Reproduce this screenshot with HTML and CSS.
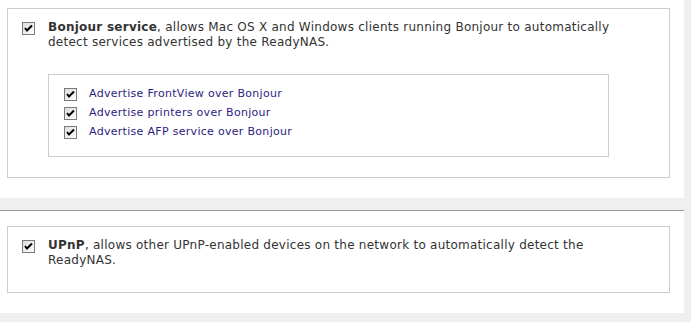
FILE: index.html
```html
<!DOCTYPE html>
<html lang="en">
<head>
  <meta charset="UTF-8" />
  <title>Discovery Services</title>
  <link rel="stylesheet" href="styles.css">
</head>
<body>
  <div class="panel">
    <div class="section top">
      <div class="box">
        <div class="row">
          <span class="check"><svg width="13" height="13" viewBox="0 0 13 13"><defs><linearGradient id="g1" x1="0" y1="0" x2="1" y2="1"><stop offset="0" stop-color="#dcdcdc"/><stop offset="1" stop-color="#ffffff"/></linearGradient></defs><rect x="0.5" y="0.5" width="12" height="12" fill="url(#g1)" stroke="#7b7b7b"/><polyline points="3,6 5,8.5 10,3.5" fill="none" stroke="#000" stroke-width="2"/></svg></span>
          <p class="desc"><b>Bonjour service</b>, allows Mac OS X and Windows clients running Bonjour to automatically detect services advertised by the ReadyNAS.</p>
        </div>

        <div class="options">
          <div class="opt">
            <span class="check"><svg width="13" height="13" viewBox="0 0 13 13"><rect x="0.5" y="0.5" width="12" height="12" fill="url(#g1)" stroke="#7b7b7b"/><polyline points="3,6 5,8.5 10,3.5" fill="none" stroke="#000" stroke-width="2"/></svg></span>
            <span class="opt-label">Advertise FrontView over Bonjour</span>
          </div>
          <div class="opt">
            <span class="check"><svg width="13" height="13" viewBox="0 0 13 13"><rect x="0.5" y="0.5" width="12" height="12" fill="url(#g1)" stroke="#7b7b7b"/><polyline points="3,6 5,8.5 10,3.5" fill="none" stroke="#000" stroke-width="2"/></svg></span>
            <span class="opt-label">Advertise printers over Bonjour</span>
          </div>
          <div class="opt">
            <span class="check"><svg width="13" height="13" viewBox="0 0 13 13"><rect x="0.5" y="0.5" width="12" height="12" fill="url(#g1)" stroke="#7b7b7b"/><polyline points="3,6 5,8.5 10,3.5" fill="none" stroke="#000" stroke-width="2"/></svg></span>
            <span class="opt-label">Advertise AFP service over Bonjour</span>
          </div>
        </div>
      </div>
    </div>

    <div class="gap"></div>

    <div class="section bottom">
      <div class="box box-upnp">
        <div class="row">
          <span class="check"><svg width="13" height="13" viewBox="0 0 13 13"><rect x="0.5" y="0.5" width="12" height="12" fill="url(#g1)" stroke="#7b7b7b"/><polyline points="3,6 5,8.5 10,3.5" fill="none" stroke="#000" stroke-width="2"/></svg></span>
          <p class="desc"><b>UPnP</b>, allows other UPnP-enabled devices on the network to automatically detect the ReadyNAS.</p>
        </div>
      </div>
    </div>
  </div>
</body>
</html>
```

FILE: styles.css
```css
body {
  margin: 0;
  background-color: #efefef;
  font-family: "DejaVu Sans", Verdana, sans-serif;
  font-size: 12px;
  letter-spacing: 0.25px;
  color: #333333;
}

.panel {
  width: 684px;
}

.section {
  background-color: #ffffff;
}

.section.top {
  padding: 8px 0 20px 7px;
}

.gap {
  height: 12px;
  border-bottom: 1px solid #999999;
}

.section.bottom {
  padding: 15px 0 20px 7px;
}

.box {
  width: 661px;
  border: 1px solid #cccccc;
  padding: 11px 0 20px 0;
}

.box-upnp {
  padding-bottom: 24px;
}

.row {
  display: flex;
  align-items: flex-start;
  padding-left: 14px;
}

.check {
  display: block;
  width: 13px;
  height: 13px;
  margin-top: 2px;
  margin-right: 13px;
  flex-shrink: 0;
}

.check svg {
  display: block;
}

.desc {
  margin: 0;
  line-height: 15px;
  width: 570px;
}

.options {
  margin: 24px 0 0 40px;
  width: 544px;
  border: 1px solid #cccccc;
  padding: 9px 0 15px 15px;
}

.opt {
  display: flex;
  align-items: center;
  height: 19px;
}

.opt .check {
  margin-top: 1px;
  margin-right: 12px;
}

.opt-label {
  color: #2b1d80;
  font-size: 11px;
  letter-spacing: 0.3px;
}
```
